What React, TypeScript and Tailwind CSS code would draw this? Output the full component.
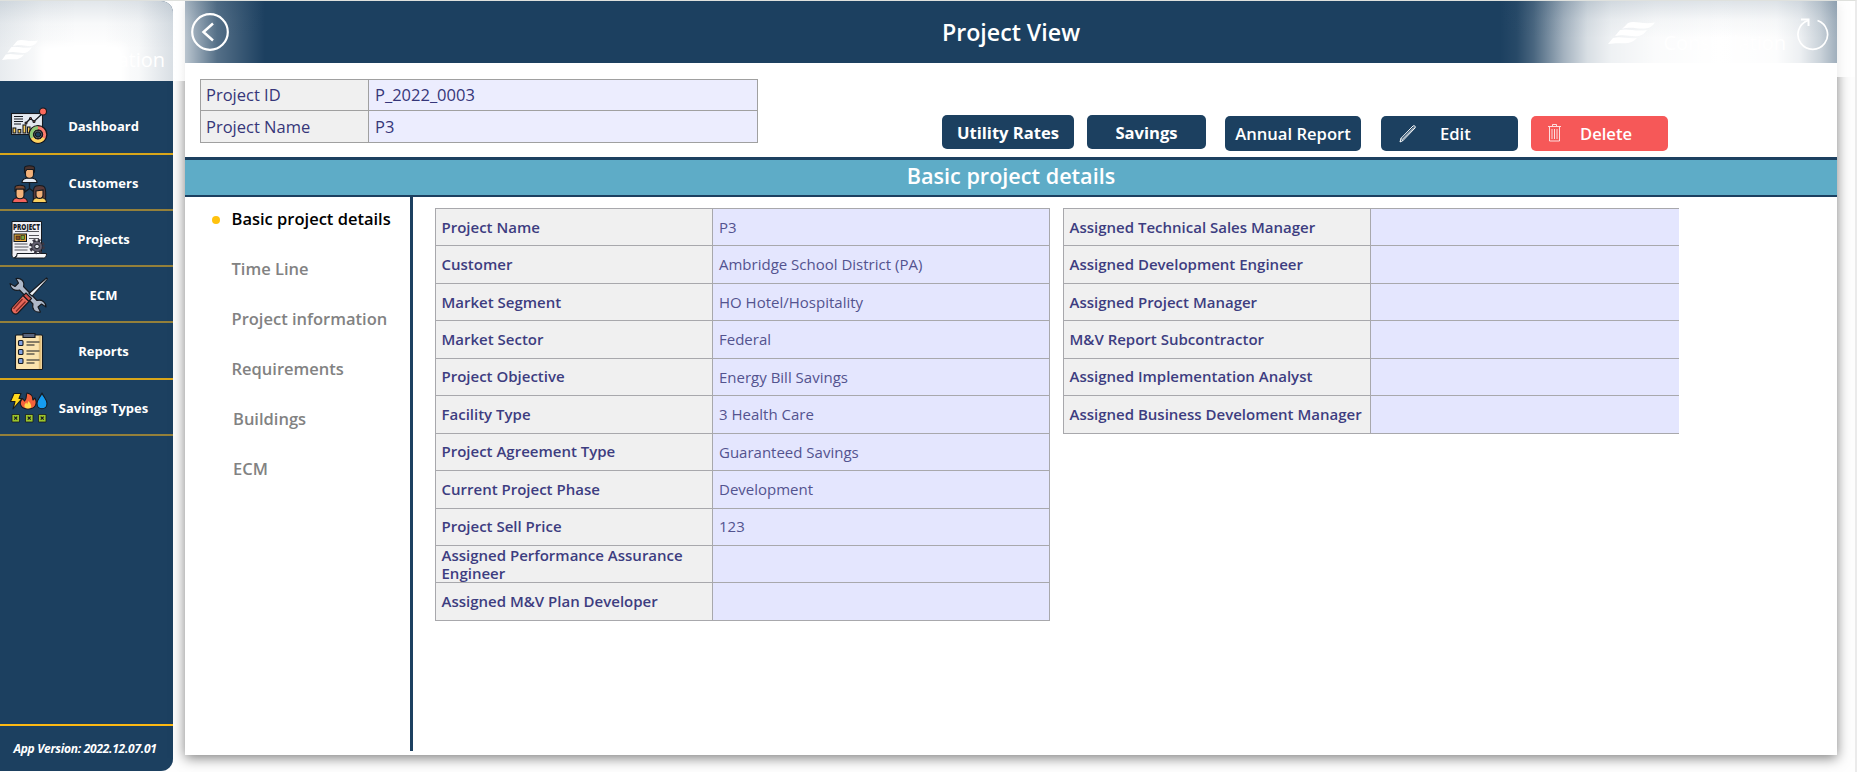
import type { ReactNode } from "react";

const INK = "#15191f";

function DashboardIcon() {
  return (
    <svg className="h-10 w-10" viewBox="0 0 40 40" stroke={INK} strokeWidth="1.1">
      <rect x="2.5" y="6.5" width="31" height="21" fill="#e4e9f0" />
      <path d="M5 9.500h9M5 12h9M5 14.500h9M5 17h7" strokeWidth="1" />
      <path d="M17 16l4.500-4.500 3.500 3 9-8.500" fill="none" strokeWidth="1.300" />
      <circle cx="21.500" cy="11.500" r="1" fill="#f4705f" />
      <circle cx="25" cy="14.500" r="1" fill="#f4705f" />
      <circle cx="17" cy="16" r="1" fill="#f4705f" />
      <rect x="4" y="21" width="2.800" height="5" fill="#fdd15c" />
      <rect x="9" y="22.500" width="2.800" height="3.500" fill="#fdd15c" />
      <rect x="14" y="18" width="2.800" height="8" fill="#fdd15c" />
      <rect x="18.500" y="20" width="2.500" height="6" fill="#fdd15c" />
      <circle cx="34" cy="4.500" r="3.500" fill="#fb6a5c" />
      <circle cx="29" cy="27.500" r="9" fill={INK} />
      <circle cx="29" cy="27.500" r="6.700" fill="none" stroke="#fb7b6c" strokeWidth="3" />
      <path d="M29 20.800a6.700 6.700 0 0 0-5.700 10.200" fill="none" stroke="#8cc976" strokeWidth="3" />
      <path d="M23.300 31a6.700 6.700 0 0 0 11.400 0" fill="none" stroke="#fbd45e" strokeWidth="3" />
      <circle cx="29" cy="27.500" r="4" fill="#aab4c4" />
      <circle cx="29" cy="27.500" r="2.600" fill="#1c4060" />
    </svg>
  );
}

function CustomersIcon() {
  return (
    <svg className="h-10 w-10" viewBox="0 0 40 40" stroke={INK} strokeWidth="1.1">
      <path d="M20.500 18v6.500M20.500 24.500l-6 4.500M20.500 24.500l6 4.500" fill="none" strokeWidth="1.300" />
      <path d="M13 18.500c0-3.500 3-4.500 7.500-4.500s7.500 1 7.500 4.500z" fill="#e4ebf5" />
      <path d="M16.500 5h8v5.500c0 5-8 5-8 0z" fill="#f3b27a" />
      <path d="M15.500 8.500v-4.500c0-3 10-3 10 0v4.500l-1.500-3h-6z" fill="#4a332e" />
      <path d="M3.500 38.500c0-4 2.500-5 7.500-5s7.500 1 7.500 5z" fill="#f4625d" />
      <path d="M7 25h8v6c0 5-8 5-8 0z" fill="#f3b27a" />
      <path d="M6 28v-4.500c0-3 10-3 10 0v4.500l-1.500-3h-7z" fill="#7a4a32" />
      <path d="M24.500 36c-1-14 1-14.500 6-14.500s7 .5 6 14.500z" fill="#5a3a39" />
      <path d="M23.500 38.500c0-4 2.500-5 7-5s7 1 7 5z" fill="#fbd05f" />
      <path d="M27 27l7-1v5c0 4.500-7 4.500-7 0z" fill="#f3b27a" />
    </svg>
  );
}

function ProjectsIcon() {
  return (
    <svg className="h-10 w-10" viewBox="0 0 40 40" stroke={INK} strokeWidth="1">
      <path d="M3 1.500h29.500v34h-25c-3 4-4.500 2-4.500-1z" fill="#f1f1f5" />
      <path d="M8 33.500h29.500c0 3-1 4.500-3 4.500h-29c2 0 2.500-2 2.500-4.500z" fill="#f8f8fa" />
      <text x="4" y="9.500" textLength="27" lengthAdjust="spacingAndGlyphs" fill={INK} stroke="none" className="font-['Open_Sans',sans-serif] text-[8px] font-extrabold">PROJECT</text>
      <path d="M6 11.500h24M20 15.500h10M20 18.500h10M5.500 24h13M5.500 27h14M5.500 30h13" stroke="#55555c" strokeWidth="1.200" />
      <rect x="5" y="14" width="12.500" height="7.500" fill="#e3a534" />
      <rect x="7" y="16" width="4" height="3.500" fill="#8a4c1e" strokeWidth=".6" />
      <rect x="12" y="15.500" width="3.500" height="4" fill="#7ba83c" strokeWidth=".6" />
      <circle cx="28" cy="26.500" r="6.300" fill="none" stroke="#3b3744" strokeWidth="3" strokeDasharray="2.700 2.250" />
      <circle cx="28" cy="26.500" r="5.300" fill="#625d6e" strokeWidth=".6" />
      <circle cx="28" cy="26.500" r="2.300" fill="#dfe0e8" />
    </svg>
  );
}

function ToolsIcon() {
  return (
    <svg className="h-10 w-10" viewBox="0 0 40 40" stroke={INK} strokeWidth="1.1" strokeLinejoin="round">
      <path d="M7 2.500c5-1 9 3 7.500 8l13.500 14c5-1.500 9 2 9 6.500l-4.500-3-3.500 3 2.500 5c-5.500 1-9-3-7.500-8l-13.500-14c-5 1.500-9-1.500-9.500-6.500l5 3 3.500-3.500z" fill="#aeb8c8" />
      <path d="M37.500 2l1 1-15.500 17-3-2.500z" fill="#edf1f6" />
      <path d="M17 17l5.500 5.500-3 3-5.500-5.500z" fill="#cf4c43" />
      <path d="M14 19.500l6 6-11.500 12c-3 2-8-2.500-5.500-6z" fill="#e8685a" />
      <path d="M13.500 23l-9 10M16.500 25.500l-9.500 10" stroke="#7f2925" strokeWidth="1.300" />
    </svg>
  );
}

function ReportsIcon() {
  return (
    <svg className="h-10 w-10" viewBox="0 0 40 40" stroke={INK} strokeWidth="1.100">
      <rect x="6.500" y="3" width="27" height="34.500" rx="1" fill="#fae3ae" />
      <path d="M31 4v33" stroke="#e2c07d" strokeWidth="2.500" />
      <path d="M14 1.500h12v4h-12z" fill="#59647c" />
      {[11, 20, 29].map((y) => (
        <g key={y}>
          <rect x="9.500" y={y - 2.5} width="4.500" height="5" rx="1" fill="#7fa0e0" />
          <path d={`M17.5 ${y - 1}h13M17.5 ${y + 2}h8`} strokeWidth="1.200" />
        </g>
      ))}
    </svg>
  );
}

function SavingsIcon() {
  return (
    <svg className="h-10 w-10" viewBox="0 0 40 40" stroke={INK} strokeWidth="1.100" strokeLinejoin="round">
      <path d="M5 4.500h7l-2 5h3l-9 10.500 2-7.500h-4.500z" fill="#ffd91c" />
      <path d="M18 4c7 1.500 5 5 6 7l2-2c2.500 5 1 11-7 11s-9.500-6.500-5.500-10.500l2 2.500c3-3 1-5.500 2.500-8z" fill="#f4623c" />
      <path d="M19.500 12c3.500 4 4 7.500-.5 7.500-5 0-4-4.500-1.500-6l.5 2z" fill="#ffd94c" stroke="none" />
      <path d="M33 4c1.500 4 5 6.500 5 10.500 0 7-10 7-10 0 0-4 3.500-6.500 5-10.500z" fill="#169cf0" />
      {[3, 16.5, 29.5].map((x) => (
        <g key={x}>
          <rect x={x} y="25.500" width="7.500" height="7.500" fill="#9cc52c" strokeWidth=".8" />
          <path d={`M${x + 2.2} 27.7l3 3m0-3l-3 3`} strokeWidth="1.200" />
        </g>
      ))}
    </svg>
  );
}

function LogoMark({ className }: { className: string }) {
  return (
    <svg className={className} viewBox="0 0 47 24" fill="#fff" preserveAspectRatio="none">
      <path d="M20 2c7-3 14 2 27-.5-2 3-4 4.500-7 5.500-10 2-15-2-26 1z" />
      <path d="M12 9c8-2 15 2 27 0-3 4-5 5-8 6-9 1-13-2-24 0z" />
      <path d="M5 17c8-2 14 1 24 0-3 3-5 4-9 5-7 .5-12-.5-20 1z" />
    </svg>
  );
}

const NAV: { label: string; icon: ReactNode; row: string }[] = [
  { label: "Dashboard", icon: <DashboardIcon />, row: "h-[57px] border-[#d9a61a]" },
  { label: "Customers", icon: <CustomersIcon />, row: "h-14 border-[#94803a]" },
  { label: "Projects", icon: <ProjectsIcon />, row: "h-14 border-[#94803a]" },
  { label: "ECM", icon: <ToolsIcon />, row: "h-14 border-[#94803a]" },
  { label: "Reports", icon: <ReportsIcon />, row: "h-[57px] border-[#d9a61a]" },
  { label: "Savings Types", icon: <SavingsIcon />, row: "h-14 border-[#94803a]" },
];

function Sidebar() {
  return (
    <aside className="flex h-[770px] w-[173px] shrink-0 flex-col overflow-hidden rounded-r-xl bg-[#1c4060]">
      <div className="relative h-20 shrink-0 overflow-hidden bg-white">
        <div className="absolute inset-0 bg-[linear-gradient(to_right,rgba(28,64,96,0.1),rgba(28,64,96,0.02)_25%,transparent_45%,transparent_60%,rgba(28,64,96,0.03)_80%,rgba(28,64,96,0.17))]" />
        <div className="absolute inset-0 bg-[linear-gradient(to_bottom,rgba(28,64,96,0.13),rgba(28,64,96,0.03)_28%,transparent_60%)]" />
        <LogoMark className="absolute left-0.5 top-[38px] h-[22px] w-9" />
        <span className="absolute right-2 top-[45px] text-[20px] leading-7 text-white">Constellation</span>
        <div className="absolute -bottom-3 left-10 right-12 top-11 bg-white blur-[5px]" />
      </div>
      <nav className="flex flex-col pt-[17px] text-[13px] font-bold text-white">
        {NAV.map((n) => (
          <div key={n.label} className={`flex items-center border-b-2 pl-[9px] pt-[3px] ${n.row}`}>
            {n.icon}
            <span className="w-[109px] text-center">{n.label}</span>
          </div>
        ))}
      </nav>
      <div className="mt-auto flex h-[47px] items-center justify-center border-t-2 border-[#fdb913] pr-[3px] text-[12px] font-bold italic text-white">
        <span className="tracking-[-0.270px]">App Version: 2022.12.07.01</span>
      </div>
    </aside>
  );
}

function Header() {
  return (
    <header className="relative flex h-[62px] shrink-0 items-center justify-center overflow-hidden bg-[#1c4060]">
      <div className="absolute inset-y-0 left-0 w-20 bg-linear-to-r from-white/70 via-white/25 via-40% to-transparent" />
      <div className="absolute inset-y-0 right-0 w-[337px] bg-[linear-gradient(to_right,transparent,rgba(255,255,255,0.05)_5%,rgba(255,255,255,0.2)_10%,rgba(255,255,255,0.6)_19%,rgba(255,255,255,0.83)_26%,rgba(255,255,255,0.93)_33%,rgba(255,255,255,0.98)_46%,#fff_65%,rgba(255,255,255,0.99)_82%,rgba(255,255,255,0.92)_89%,rgba(255,255,255,0.77)_95%,rgba(255,255,255,0.58))]" />
      <div className="absolute inset-0 bg-[linear-gradient(to_bottom,rgba(28,64,96,0.14),rgba(28,64,96,0.035)_30%,transparent_60%)]" />
      <svg className="absolute left-[6px] top-3 h-[38px] w-[38px]" viewBox="0 0 38 38" fill="none" stroke="#fff">
        <circle cx="19" cy="19" r="17.800" strokeWidth="2.200" />
        <path d="M22 10.500l-9.500 8.500 9.500 8.500" strokeWidth="2.500" />
      </svg>
      <h1 className="relative pt-0.5 text-[23.200px] font-semibold leading-none text-white">Project View</h1>
      <LogoMark className="absolute right-[182px] top-5 h-6 w-[47px]" />
      <span className="absolute right-[51px] top-7 text-[20px] leading-7 text-white">Constellation</span>
      <svg className="absolute right-2 top-4 h-[34px] w-8" viewBox="0 0 32 34" fill="none" stroke="#fff" strokeWidth="1.700">
        <path d="M20.500 3.500a14.800 14.800 0 1 1-9.500 0" />
        <path d="M4 2.500h7.500v6.500" strokeWidth="2" />
      </svg>
    </header>
  );
}

function Toolbar() {
  return (
    <section className="flex h-[94px] shrink-0 pl-[15px]">
      <div className="mt-4 grid h-16 w-[558px] grid-cols-[168px_1fr] grid-rows-2 border border-[#a0a0a0] text-[16.500px] font-medium text-[#363679]">
        <div className="flex items-center border-b border-r border-[#a0a0a0] bg-[#f0f0f0] pl-[5px]">Project ID</div>
        <div className="flex items-center border-b border-[#a0a0a0] bg-[#ecedfe] pl-1.5">P_2022_0003</div>
        <div className="flex items-center border-r border-[#a0a0a0] bg-[#f0f0f0] pl-[5px] pt-px">Project Name</div>
        <div className="flex items-center bg-[#ecedfe] pl-1.5 pt-px">P3</div>
      </div>
      <div className="ml-[184px] mt-[52px] flex items-start text-[16.600px] font-semibold text-white">
        <button className="h-[34px] w-[132px] rounded-[5px] bg-[#1c4060] pt-0.5 font-bold">Utility Rates</button>
        <button className="ml-[13px] h-[34px] w-[119px] rounded-[5px] bg-[#1c4060] pt-0.5 font-bold">Savings</button>
        <button className="ml-[19px] mt-px h-[35px] w-[136px] whitespace-nowrap rounded-[5px] bg-[#1c4060] pt-0.5">Annual Report</button>
        <button className="ml-5 mt-px flex h-[35px] w-[137px] items-center rounded-[5px] bg-[#1c4060] pl-[18px]">
          <svg className="h-[18px] w-[18px]" viewBox="0 0 18 18" fill="none" stroke="#fff" strokeWidth="1">
            <path d="M1 17l1-3.700 12-12.300c1.400-1 3 .6 2 2l-12 12.500zM2 13.300l2 2.200M3.500 14.200l11.500-11.700" />
          </svg>
          <span className="ml-[23px] pt-0.5">Edit</span>
        </button>
        <button className="ml-[13px] mt-px flex h-[35px] w-[137px] items-center rounded-[5px] bg-[#f65858] pl-[17px]">
          <svg className="mb-0.5 h-[18px] w-[13px]" viewBox="0 0 13 18" fill="none" stroke="#fff" strokeOpacity=".8" strokeWidth="1">
            <path d="M0 2.500h13M4.500 2v-1.500h4v1.500M1.500 3v14h10v-14M4 5v10M6.500 5v10M9 5v10" />
          </svg>
          <span className="ml-[19px] pt-0.5">Delete</span>
        </button>
      </div>
    </section>
  );
}

const TABS = ["Basic project details", "Time Line", "Project information", "Requirements", "Buildings", "ECM"];

const LEFT: [string, string][] = [
  ["Project Name", "P3"],
  ["Customer", "Ambridge School District (PA)"],
  ["Market Segment", "HO Hotel/Hospitality"],
  ["Market Sector", "Federal"],
  ["Project Objective", "Energy Bill Savings"],
  ["Facility Type", "3 Health Care"],
  ["Project Agreement Type", "Guaranteed Savings"],
  ["Current Project Phase", "Development"],
  ["Project Sell Price", "123"],
  ["Assigned Performance Assurance Engineer", ""],
  ["Assigned M&V Plan Developer", ""],
];

const RIGHT: [string, string][] = [
  ["Assigned Technical Sales Manager", ""],
  ["Assigned Development Engineer", ""],
  ["Assigned Project Manager", ""],
  ["M&V Report Subcontractor", ""],
  ["Assigned Implementation Analyst", ""],
  ["Assigned Business Develoment Manager", ""],
];

function Details({ rows, className, cols }: { rows: [string, string][]; className: string; cols: string }) {
  return (
    <div className={`self-start border-l border-t border-[#a8a8ac] text-[15px] ${className}`}>
      {rows.map(([k, v]) => (
        <div key={k} className={`grid h-[37.450px] border-b border-[#a8a8ac] ${cols}`}>
          <div className="flex items-center overflow-hidden border-r border-[#a8a8ac] bg-[#f0f0f0] pb-px pl-[5.500px] font-semibold leading-[18px] text-[#3d3d80]">
            <span>{k}</span>
          </div>
          <div className="flex items-center bg-[#e4e6fe] pl-1.5 text-[#53538f]">{v}</div>
        </div>
      ))}
    </div>
  );
}

export default function App() {
  return (
    <div className="relative flex h-[772px] w-[1857px] overflow-hidden border-r-2 border-t border-r-[#ebebeb] border-t-[#dfe1dd] bg-[#fefefe] font-['Open_Sans',sans-serif]">
      <Sidebar />
      <main className="ml-3 flex h-[754px] w-[1652px] shrink-0 flex-col bg-white shadow-[0_3px_12px_rgba(0,0,0,0.5)]">
        <Header />
        <Toolbar />
        <div className="flex h-10 shrink-0 items-center justify-center border-b-2 border-t-[3px] border-[#1c4060] bg-[#5eacc7] pb-1 text-[21.600px] font-semibold leading-none text-white">
          Basic project details
        </div>
        <div className="flex h-[554px]">
          <ul className="flex w-[228px] flex-col border-r-[3px] border-[#1c4060] text-[16.500px] font-semibold text-[#828282]">
            {TABS.map((t, i) => (
              <li key={t} className={`flex items-center whitespace-nowrap ${i === 0 ? "h-[47px] pb-[2px] text-black" : "h-[50px]"} ${i > 3 ? "pl-12" : "pl-[46.500px]"}`}>
                {i === 0 && <span className="-ml-[20px] mr-3 h-2 w-2 rounded-full bg-[#ffc20e]" />}
                {t}
              </li>
            ))}
          </ul>
          <Details rows={LEFT} className="ml-[22px] mt-[11px] w-[615px] border-r" cols="grid-cols-[277px_1fr]" />
          <Details rows={RIGHT} className="ml-[13px] mt-[11px] w-[616px]" cols="grid-cols-[307px_1fr]" />
        </div>
      </main>
      <div className="absolute left-[173px] top-0 h-20 w-3 bg-linear-to-r from-white to-white/80" />
      <div className="absolute right-0 top-0 h-[76px] w-[18px] bg-white/80" />
    </div>
  );
}
